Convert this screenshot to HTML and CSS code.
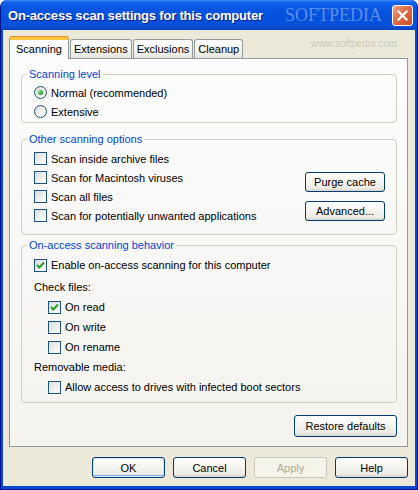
FILE: index.html
```html
<!DOCTYPE html>
<html lang="en">
<head>
    <meta charset="UTF-8">
    <meta name="viewport" content="width=device-width, initial-scale=1.0">
    <title>On-access scan settings</title>
    <link rel="stylesheet" href="styles.css">
</head>
<body>
    <div class="window">
        <div class="titlebar">
            <span class="title">On-access scan settings for this computer</span>
            <span class="watermark">SOFTPEDIA</span>
            <button class="close" type="button" aria-label="Close">
                <svg width="11" height="11" viewBox="0 0 11 11">
                    <path d="M1.5 1.5 L9.5 9.5 M9.5 1.5 L1.5 9.5" stroke="#fff" stroke-width="2.2" stroke-linecap="square"/>
                </svg>
            </button>
        </div>

        <div class="client">
            <div class="tabs">
                <div class="tab active">Scanning</div>
                <div class="tab">Extensions</div>
                <div class="tab">Exclusions</div>
                <div class="tab">Cleanup</div>
                <span class="site">www.softpedia.com</span>
            </div>

            <div class="panel">
                <fieldset class="group level">
                    <legend>Scanning level</legend>
                    <label class="row"><span class="radio on"></span>Normal (recommended)</label>
                    <label class="row"><span class="radio"></span>Extensive</label>
                </fieldset>

                <fieldset class="group other">
                    <legend>Other scanning options</legend>
                    <div class="split">
                        <div class="list">
                            <label class="row"><span class="box"></span>Scan inside archive files</label>
                            <label class="row"><span class="box"></span>Scan for Macintosh viruses</label>
                            <label class="row"><span class="box"></span>Scan all files</label>
                            <label class="row"><span class="box"></span>Scan for potentially unwanted applications</label>
                        </div>
                        <div class="side-buttons">
                            <button class="btn small" type="button">Purge cache</button>
                            <button class="btn small" type="button">Advanced...</button>
                        </div>
                    </div>
                </fieldset>

                <fieldset class="group behavior">
                    <legend>On-access scanning behavior</legend>
                    <label class="row"><span class="box checked"><svg width="11" height="11" viewBox="0 0 11 11"><path d="M2 5 L4.3 7.5 L9 2.5" fill="none" stroke="#21A121" stroke-width="2"/></svg></span>Enable on-access scanning for this computer</label>
                    <div class="row caption first">Check files:</div>
                    <label class="row indent"><span class="box checked"><svg width="11" height="11" viewBox="0 0 11 11"><path d="M2 5 L4.3 7.5 L9 2.5" fill="none" stroke="#21A121" stroke-width="2"/></svg></span>On read</label>
                    <label class="row indent"><span class="box"></span>On write</label>
                    <label class="row indent"><span class="box"></span>On rename</label>
                    <div class="row caption">Removable media:</div>
                    <label class="row indent"><span class="box"></span>Allow access to drives with infected boot sectors</label>
                </fieldset>

                <div class="panel-foot">
                    <button class="btn restore" type="button">Restore defaults</button>
                </div>
            </div>

            <div class="dialog-buttons">
                <button class="btn default" type="button">OK</button>
                <button class="btn" type="button">Cancel</button>
                <button class="btn" type="button" disabled>Apply</button>
                <button class="btn" type="button">Help</button>
            </div>
        </div>
    </div>
</body>
</html>
```

FILE: styles.css
```css
body {
    margin: 0;
    font-family: "Liberation Sans", Arial, sans-serif;
    font-size: 11px;
    color: #000;
    background: #fff;
}

.window {
    width: 418px;
    height: 490px;
    box-sizing: border-box;
    display: flex;
    flex-direction: column;
    background: #0A48D2;
    border: 1px solid #00138C;
    border-top: none;
    border-radius: 7px 7px 0 0;
    overflow: hidden;
}

/* title bar */
.titlebar {
    position: relative;
    height: 30px;
    flex-shrink: 0;
    display: flex;
    align-items: center;
    padding: 0 4px 0 7px;
    background: linear-gradient(to bottom, #3C8CF8 0%, #1263EE 8%, #0856E2 25%, #0451DD 60%, #0651D8 85%, #0042C0 100%);
}

.title {
    font-weight: bold;
    font-size: 13px;
    color: #fff;
    text-shadow: 1px 1px 0 #0A1E8A;
    flex: 1;
    letter-spacing: -0.2px;
}

.watermark {
    position: absolute;
    left: 284px;
    top: 5px;
    font-family: "Liberation Serif", serif;
    font-size: 18px;
    color: rgba(255, 255, 255, 0.35);
}

.close {
    position: relative;
    z-index: 1;
    width: 21px;
    height: 21px;
    padding: 0;
    display: flex;
    align-items: center;
    justify-content: center;
    border: 1px solid #fff;
    border-radius: 3px;
    background: linear-gradient(135deg, #F0A58A 0%, #E2704C 40%, #CC4A22 100%);
}

/* client area */
.client {
    position: relative;
    flex: 1;
    margin: 0 2px 3px 2px;
    padding: 7px 7px 0 6px;
    background: #ECE9D8;
}

.site {
    position: absolute;
    left: 308px;
    top: 8px;
    font-size: 10px;
    color: #C9C9C0;
}

.tabs {
    display: flex;
    align-items: flex-end;
    gap: 1px;
    height: 21px;
}

.tab {
    height: 18px;
    line-height: 19px;
    padding: 0 3px;
    border: 1px solid #919B9C;
    border-bottom: none;
    border-radius: 3px 3px 0 0;
    background: linear-gradient(to bottom, #FFFFFF, #F3F3EF 60%, #E6E6DF);
}

.tab.active {
    position: relative;
    z-index: 1;
    height: 19px;
    margin-bottom: -1px;
    padding: 0 6px;
    line-height: 18px;
    border-top: 3px solid #FFC83C;
    background: #FCFCFE;
    box-shadow: 0 -1px 0 #E68B2C;
}

.panel {
    height: 389px;
    box-sizing: border-box;
    padding: 9px 10px 0 11px;
    border: 1px solid #919B9C;
    background: linear-gradient(to bottom, #FCFCFE, #F4F3EE);
}

/* group boxes */
.group {
    margin: 0;
    border: 1px solid #D0D0BF;
    border-radius: 4px;
    padding: 2px 12px 1px 12px;
}

.group legend {
    padding: 0 2px;
    margin-left: -7px;
    line-height: 13px;
    color: #0046D5;
}

.group.other {
    margin-top: 10px;
    padding: 3px 11px 9px 12px;
}

.group.behavior {
    margin-top: 4px;
    padding: 3px 12px 5px 12px;
}

.row {
    display: flex;
    align-items: center;
    height: 19px;
    gap: 4px;
}

.behavior .row {
    height: 20px;
}

.behavior .row.first {
    margin-top: 2px;
}

.row.indent {
    padding-left: 14px;
}

.split {
    display: flex;
    justify-content: space-between;
    align-items: flex-end;
}

.side-buttons {
    display: flex;
    flex-direction: column;
    gap: 9px;
    margin-bottom: 4px;
}

/* checkbox and radio */
.box {
    width: 13px;
    height: 13px;
    box-sizing: border-box;
    flex-shrink: 0;
    display: flex;
    align-items: center;
    justify-content: center;
    border: 1px solid #1C5180;
    background: linear-gradient(135deg, #DCDCD7, #FFFFFF);
}

.radio {
    width: 13px;
    height: 13px;
    box-sizing: border-box;
    flex-shrink: 0;
    border: 1px solid #1C5180;
    border-radius: 50%;
    background: linear-gradient(135deg, #DCDCD7, #FFFFFF);
    display: flex;
    align-items: center;
    justify-content: center;
}

.radio.on::after {
    content: "";
    width: 5px;
    height: 5px;
    border-radius: 50%;
    background: radial-gradient(circle at 35% 35%, #8AE08A, #21A121 70%);
}

/* buttons */
.btn {
    font-family: "Liberation Sans", Arial, sans-serif;
    font-size: 11px;
    color: #000;
    height: 21px;
    padding: 0 6px;
    border: 1px solid #003C74;
    border-radius: 3px;
    background: linear-gradient(to bottom, #FFFFFF 0%, #F4F4F0 50%, #ECEBE6 85%, #D6D0C5 100%);
}

.btn.small {
    width: 80px;
    height: 20px;
}

.btn.default {
    box-shadow: inset 0 0 0 1px #CEE7FF, inset 0 -1px 0 1px #89ADE4;
}

.btn:disabled {
    color: #ACA899;
    border-color: #C9C7BA;
    background: #F5F4EA;
}

.panel-foot {
    display: flex;
    justify-content: flex-end;
    margin-top: 12px;
}

.btn.restore {
    width: 103px;
    height: 22px;
}

.dialog-buttons {
    display: flex;
    justify-content: flex-end;
    gap: 8px;
    margin-top: 10px;
}

.dialog-buttons .btn {
    width: 73px;
}
```
